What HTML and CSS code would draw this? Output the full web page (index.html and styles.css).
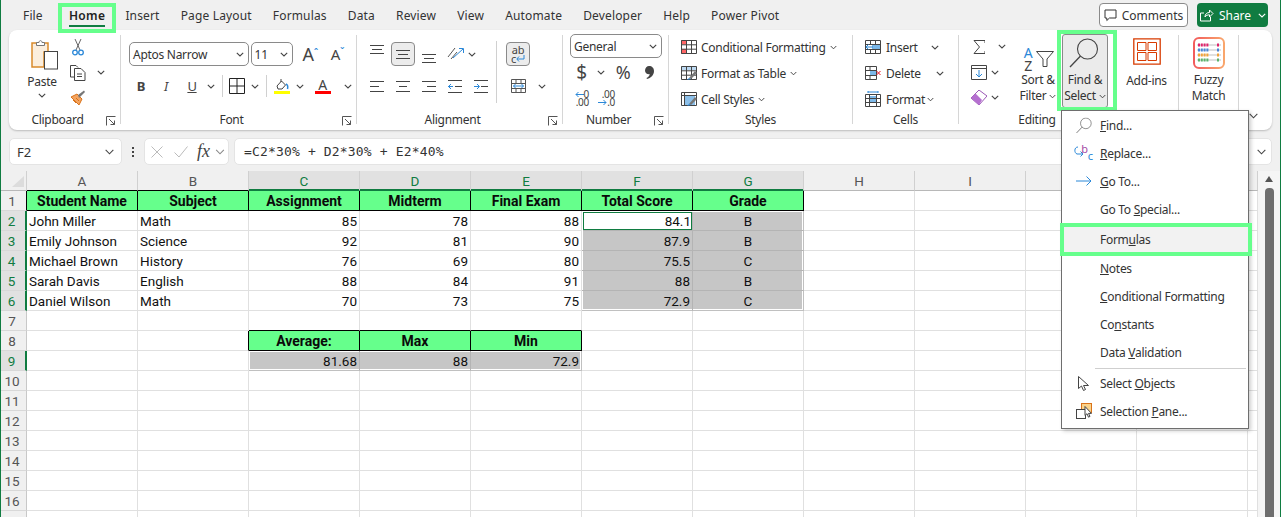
FILE: index.html
```html
<!DOCTYPE html>
<html lang="en">
<head>
<meta charset="utf-8">
<title>Excel – Find &amp; Select</title>
<link rel="stylesheet" href="styles.css">
</head>
<body>
<svg class="defs" width="0" height="0" aria-hidden="true">
  <symbol id="chev" viewBox="0 0 8 5"><path d="M.8.8 4 4 7.2.8" fill="none" stroke="#444" stroke-width="1.1"/></symbol>
  <symbol id="launch" viewBox="0 0 10 10"><path d="M.5 9.5V.5h9M3 3l5.5 5.5M4.5 8.5h4v-4" fill="none" stroke="#555"/></symbol>
  <symbol id="lens" viewBox="0 0 30 30"><circle cx="18.5" cy="11" r="10" fill="none" stroke="#444" stroke-width="1.1"/><path d="M11.5 18 1 29" fill="none" stroke="#444" stroke-width="1.3"/></symbol>
</svg>
<div class="window">

<header class="tabs">
  <nav class="tablist">
    <span class="tab">File</span><span class="tab tab-on">Home</span><span class="tab">Insert</span><span class="tab">Page Layout</span><span class="tab">Formulas</span><span class="tab">Data</span><span class="tab">Review</span><span class="tab">View</span><span class="tab">Automate</span><span class="tab">Developer</span><span class="tab">Help</span><span class="tab">Power Pivot</span>
  </nav>
  <div class="actions">
    <button class="btn-comments"><svg width="13" height="13" viewBox="0 0 13 13"><path d="M1 1h11v8H5.500L2.800 11.500V9H1z" fill="none" stroke="#333"/></svg>Comments</button>
    <button class="btn-share"><svg width="15" height="14" viewBox="0 0 15 14"><path d="M5 5H1.500v8h10V9M6 9c0-3 2-4.500 4.500-4.500V2L14 5.500 10.500 9V6.800C8.500 6.800 7 7.500 6 9z" fill="none" stroke="#fff"/></svg>Share<svg class="share-chev" width="8" height="5" viewBox="0 0 8 5"><path d="M.8.8 4 4 7.200.8" fill="none" stroke="#fff" stroke-width="1.100"/></svg></button>
  </div>
</header>

<section class="ribbon">

  <div class="group g-clip">
    <div class="body clip-body">
      <div class="paste">
        <svg class="paste-ic" width="28" height="31" viewBox="0 0 28 31"><path d="M7 4H1v24h12V13h4V4h-6" fill="#fbeedd" stroke="#d98a2b" stroke-width="1.500"/><path d="M5.500 6.500V3.500H8C8 1 11 1 11 3.500h2.500v3z" fill="#fff" stroke="#777"/><rect x="13.500" y="12.500" width="13" height="17.500" fill="#fff" stroke="#444"/></svg>
        <span class="paste-t">Paste</span>
        <svg class="ch" width="8" height="5"><use href="#chev"/></svg>
      </div>
      <div class="clip-small">
        <svg width="12" height="17" viewBox="0 0 12 17"><path d="M3 0l5 11M9 0 4 11" fill="none" stroke="#666"/><circle cx="3" cy="13.500" r="2.300" fill="none" stroke="#2b88d8" stroke-width="1.300"/><circle cx="9" cy="13.500" r="2.300" fill="none" stroke="#2b88d8" stroke-width="1.300"/></svg>
        <i></i>
        <svg width="16" height="16" viewBox="0 0 16 16"><path d="M5 12H.5V.5H6l2 2" fill="none" stroke="#444"/><path d="M4.500 3.500H11l4 4v8H4.500z" fill="#fff" stroke="#444"/><path d="M7 9h5M7 11.500h5" stroke="#444"/></svg>
        <svg class="ch" width="8" height="5"><use href="#chev"/></svg>
        <svg width="16" height="16" viewBox="0 0 16 16"><path d="M1 7 7 4l5 5-3 6z" fill="#f4a460" stroke="#d9731a"/><path d="M8 5l1 3 6-6-1-1.500z" fill="#777"/><path d="M3 10l3 3M6 8l3 3" stroke="#d9731a"/></svg>
        <i></i>
      </div>
    </div>
    <div class="label"><span>Clipboard</span><svg width="10" height="10"><use href="#launch"/></svg></div>
  </div>

  <div class="group g-font">
    <div class="body font-body">
      <div class="font-top">
        <div class="combo c-font"><span>Aptos Narrow</span><svg width="8" height="5"><use href="#chev"/></svg></div>
        <div class="combo c-size"><span>11</span><svg width="8" height="5"><use href="#chev"/></svg></div>
        <span class="grow">A<sup>ˆ</sup></span>
        <span class="shrink">A<sup>ˇ</sup></span>
      </div>
      <div class="font-bottom">
        <b class="fmt">B</b><em class="fmt">I</em><u class="fmt">U</u>
        <svg width="8" height="5"><use href="#chev"/></svg>
        <span class="vsep"></span>
        <svg width="16" height="16" viewBox="0 0 16 16"><path d="M.5.500h15v15H.500zM8 .5v15M.5 8h15" fill="none" stroke="#222"/></svg>
        <svg width="8" height="5"><use href="#chev"/></svg>
        <span class="vsep"></span>
        <svg width="16" height="16" viewBox="0 0 16 16"><path d="M3 8l4.500-5 4 4-3.500 4H4z" fill="#fff" stroke="#444"/><path d="M7 1v3" stroke="#444"/><path d="M12 6c2 1 2 3 1.500 5" fill="none" stroke="#2b88d8" stroke-width="1.500"/><rect y="13" width="16" height="3" fill="#ff0"/></svg>
        <svg width="8" height="5"><use href="#chev"/></svg>
        <span class="fcolor">A</span>
        <svg width="8" height="5"><use href="#chev"/></svg>
      </div>
    </div>
    <div class="label"><span>Font</span><svg width="10" height="10"><use href="#launch"/></svg></div>
  </div>

  <div class="group g-align">
    <div class="body align-body">
      <svg class="al-top" width="14" height="9" viewBox="0 0 14 9"><path d="M0 .5h14M2 4.500h10M0 8.500h14" stroke="#444"/></svg>
      <span class="pressed"><svg width="14" height="9" viewBox="0 0 14 9"><path d="M0 .5h14M2 4.500h10M0 8.500h14" stroke="#444"/></svg></span>
      <svg class="al-bot" width="14" height="9" viewBox="0 0 14 9"><path d="M0 .5h14M2 4.500h10M0 8.500h14" stroke="#444"/></svg>
      <svg width="17" height="16" viewBox="0 0 17 16"><path d="M1 11 8 2M4 13l6-7" stroke="#555"/><path d="M6 12 16 3M12 2.500h4.500V7" fill="none" stroke="#2b88d8"/></svg>
      <svg class="a-chev" width="8" height="5"><use href="#chev"/></svg>
      <span class="vsep tall"></span>
      <span class="pressed wrap"><span>ab</span><span class="wrap-c">c<svg width="9" height="8" viewBox="0 0 9 8"><path d="M8 0v4H1M3 1.500 .8 4 3 6.500" fill="none" stroke="#2b88d8"/></svg></span></span>
      <svg class="al" width="14" height="11" viewBox="0 0 14 11"><path d="M0 .5h14M0 5.500h9M0 10.500h14" stroke="#444"/></svg>
      <svg class="al" width="14" height="11" viewBox="0 0 14 11"><path d="M0 .5h14M3 5.500h8M0 10.500h14" stroke="#444"/></svg>
      <svg class="al" width="14" height="11" viewBox="0 0 14 11"><path d="M0 .5h14M5 5.500h9M0 10.500h14" stroke="#444"/></svg>
      <svg class="al" width="14" height="13" viewBox="0 0 14 13"><path d="M0 .5h14M7 6.500h7M0 12.500h14" stroke="#444"/><path d="M5 6.500H0M3 4 .5 6.500 3 9" fill="none" stroke="#2b88d8"/></svg>
      <svg class="al" width="14" height="13" viewBox="0 0 14 13"><path d="M0 .5h14M7 6.500h7M0 12.500h14" stroke="#444"/><path d="M0 6.500h5M3 4l2.500 2.500L3 9" fill="none" stroke="#2b88d8"/></svg>
      <svg class="merge" width="15" height="14" viewBox="0 0 15 14"><path d="M.5.500h14v13H.500zM.5 4.500h14M.5 9.500h14M5 .5v4M10 .5v4M5 9.500v4M10 9.500v4" fill="none" stroke="#555"/><path d="M2.500 7h10M4.500 5 2.500 7l2 2M10.500 5l2 2-2 2" fill="none" stroke="#2b88d8"/></svg>
      <svg class="m-chev" width="8" height="5"><use href="#chev"/></svg>
    </div>
    <div class="label"><span>Alignment</span><svg width="10" height="10"><use href="#launch"/></svg></div>
  </div>

  <div class="group g-num">
    <div class="body num-body">
      <div class="combo c-num"><span>General</span><svg width="8" height="5"><use href="#chev"/></svg></div>
      <div class="num-row">
        <span class="big">$</span>
        <svg width="8" height="5"><use href="#chev"/></svg>
        <span class="big pct">%</span>
        <svg width="9" height="13" viewBox="0 0 9 13"><path d="M4 0c3 0 5 2 5 5 0 4-3 7-7 8l-.5-1c2-1 3-2.500 3.300-3.800C2 8.500 0 7 0 4.500 0 2 2 0 4 0z" fill="#444"/></svg>
      </div>
      <div class="num-row2">
        <span class="dec"><svg width="9" height="7" viewBox="0 0 9 7"><path d="M9 3.500H1M3.500 1 1 3.500 3.500 6" fill="none" stroke="#2b88d8"/></svg>0<br>.00</span>
        <span class="dec">.00<br><svg width="9" height="7" viewBox="0 0 9 7"><path d="M0 3.500h8M5.500 1 8 3.500 5.500 6" fill="none" stroke="#2b88d8"/></svg>.0</span>
      </div>
    </div>
    <div class="label"><span>Number</span><svg width="10" height="10"><use href="#launch"/></svg></div>
  </div>

  <div class="group g-styles">
    <div class="body list-body">
      <div class="li"><svg width="16" height="14" viewBox="0 0 16 14"><rect width="6" height="4.500" y="0" fill="#f66"/><rect y="9" width="6" height="5" fill="#f66"/><path d="M.5.500h15v13H.500zM.5 4.800h15M.5 9.200h15M5.500.5v13M10.500.5v13" fill="none" stroke="#444"/></svg><span>Conditional Formatting</span><svg width="7" height="5"><use href="#chev"/></svg></div>
      <div class="li"><svg width="16" height="14" viewBox="0 0 16 14"><rect y="0" width="16" height="4" fill="#bcd9f2"/><path d="M.5.500h15v13H.500zM.5 4.800h15M.5 9.200h15M5.500.5v13M10.500.5v13" fill="none" stroke="#444"/><path d="M8 12 14 5l2 2-6 6z" fill="#777"/><path d="M6 14l2-2 2 1z" fill="#2b88d8"/></svg><span>Format as Table</span><svg width="7" height="5"><use href="#chev"/></svg></div>
      <div class="li"><svg width="16" height="14" viewBox="0 0 16 14"><rect x="3" y="3" width="11" height="10" fill="#8cc0ea"/><path d="M.5.500h15v13H.500zM.5 3.500h15M3.500.5v13" fill="none" stroke="#444"/><path d="M8 12 14 5l2 2-6 6z" fill="#777"/><path d="M6 14l2-2 2 1z" fill="#2b88d8"/></svg><span>Cell Styles</span><svg width="7" height="5"><use href="#chev"/></svg></div>
    </div>
    <div class="label label-c"><span>Styles</span></div>
  </div>

  <div class="group g-cells">
    <div class="body list-body cells-body">
      <div class="li"><svg width="16" height="14" viewBox="0 0 16 14"><rect x="7" y="4" width="8" height="5" fill="#7cb8e8"/><path d="M.5.500h15v13H.500zM.5 4.500h15M.5 9.500h15M5.500.5v4M10.500.5v4M5.500 9.500v4M10.500 9.500v4" fill="none" stroke="#444"/><path d="M8 7H1M3.500 4.500 1 7l2.500 2.500" fill="none" stroke="#2b88d8"/></svg><span>Insert</span><svg class="c1" width="8" height="5"><use href="#chev"/></svg></div>
      <div class="li"><svg width="16" height="14" viewBox="0 0 16 14"><rect x="5" y="4" width="6" height="6" fill="#7cb8e8"/><path d="M.5.500h11v13H.500zM.5 4.500h11M.5 9.500h11M5 .5v4M5 9.500v4" fill="none" stroke="#444"/><path d="M11.500 5 15.500 9M15.500 5l-4 4" stroke="#e81123"/></svg><span>Delete</span><svg class="c2" width="8" height="5"><use href="#chev"/></svg></div>
      <div class="li"><svg width="16" height="16" viewBox="0 0 16 16"><rect x="5" y="5" width="7" height="6" fill="#7cb8e8"/><path d="M.5 3.500h15v12H.500zM.5 7.500h15M.5 11.500h15M4.500 3.500v12M11.500 3.500v12" fill="none" stroke="#444"/><path d="M3 1h10M3 0v2M13 0v2" stroke="#2b88d8"/></svg><span>Format</span><svg class="c4" width="7" height="5"><use href="#chev"/></svg></div>
    </div>
    <div class="label label-c"><span>Cells</span></div>
  </div>

  <div class="group g-edit">
    <div class="body edit-body">
      <div class="edit-small">
        <svg width="12" height="14" viewBox="0 0 12 14"><path d="M12 3V.5H1L6.500 7 1 13.500h11V11" fill="none" stroke="#444"/></svg>
        <svg class="c3" width="8" height="5"><use href="#chev"/></svg>
        <svg width="16" height="15" viewBox="0 0 16 15"><path d="M.5.500h15v14H.500zM.5 3.500h15" fill="none" stroke="#444"/><path d="M8 5v7M5 9l3 3 3-3" fill="none" stroke="#2b88d8"/></svg>
        <svg width="8" height="5"><use href="#chev"/></svg>
        <svg width="16" height="15" viewBox="0 0 16 15"><path d="M0 8 8 0l8 6-8 9z" fill="#fff" stroke="#9a57b5"/><path d="M0 8 4.500 3.500 11 10 8 15z" fill="#b56fd0"/></svg>
        <svg width="8" height="5"><use href="#chev"/></svg>
      </div>
      <div class="big-btn sort">
        <span class="sort-ic"><span class="az"><span class="a">A</span><span class="z">Z</span></span><svg width="18" height="16" viewBox="0 0 18 16"><path d="M.5.500h17L11 8v7.500H7V8z" fill="#fff" stroke="#444"/></svg></span>
        <span class="t">Sort &amp;</span>
        <span class="t">Filter <svg width="7" height="5"><use href="#chev"/></svg></span>
      </div>
      <div class="big-btn find">
        <svg class="lens" width="30" height="30"><use href="#lens"/></svg>
        <span class="t">Find &amp;</span>
        <span class="t">Select <svg width="7" height="5"><use href="#chev"/></svg></span>
      </div>
    </div>
    <div class="label label-c"><span>Editing</span></div>
  </div>

  <div class="group g-add">
    <div class="body">
      <div class="big-btn">
        <svg class="bi" width="28" height="27" viewBox="0 0 28 27"><path d="M.8.800h26.400v25.400H.800z" fill="none" stroke="#d83b01" stroke-width="1.300"/><path d="M4.500 4.500h8.500v8H4.500zM15 4.500h8.500v8H15zM4.500 14.500h8.500v8H4.500zM15 14.500h8.500v8H15z" fill="none" stroke="#d83b01"/></svg>
        <span class="t">Add-ins</span>
      </div>
    </div>
  </div>

  <div class="group g-fuzzy">
    <div class="body">
      <div class="big-btn">
        <svg class="fz" width="32" height="32" viewBox="0 0 32 32">
          <defs><linearGradient id="fg" x1="0" y1="0" x2="1" y2="0"><stop offset="0" stop-color="#f25c5c"/><stop offset="1" stop-color="#f9a66c"/></linearGradient></defs>
          <rect x="1" y="1" width="30" height="30" rx="5" fill="#fff" stroke="url(#fg)" stroke-width="2"/>
          <path d="M4 8h24M4 13h24M4 18h24M4 23h24" stroke="#999" stroke-width=".6"/>
          <path d="M5 8h11M24 8h2" stroke="#e0246c" stroke-width="3" stroke-dasharray="2 .8"/>
          <path d="M5 13h11M24 13h2" stroke="#4a86d8" stroke-width="3" stroke-dasharray="2 .8"/>
          <path d="M5 18h11M24 18h2" stroke="#f2a33a" stroke-width="3" stroke-dasharray="2 .8"/>
          <path d="M5 23h11M24 23h2" stroke="#5bb36a" stroke-width="3" stroke-dasharray="2 .8"/>
        </svg>
        <span class="t">Fuzzy</span>
        <span class="t">Match</span>
      </div>
    </div>
  </div>

  <svg class="collapse" width="11" height="6" viewBox="0 0 8 5"><path d="M.8.800 4 4 7.200.8" fill="none" stroke="#444" stroke-width=".9"/></svg>
</section>

<section class="fbar">
  <div class="namebox"><span>F2</span><svg width="11" height="6" viewBox="0 0 8 5"><path d="M.8.800 4 4 7.200.8" fill="none" stroke="#444" stroke-width=".9"/></svg></div>
  <div class="dots"><i></i><i></i><i></i></div>
  <div class="fx">
    <svg width="12" height="12" viewBox="0 0 12 12"><path d="M.5.500l11 11M11.500.5l-11 11" stroke="#bbb"/></svg>
    <svg width="14" height="12" viewBox="0 0 14 12"><path d="M.5 6.500 5 11 13.500.5" fill="none" stroke="#bbb"/></svg>
    <em>fx</em>
    <svg width="10" height="6" viewBox="0 0 8 5"><path d="M.8.800 4 4 7.200.8" fill="none" stroke="#888" stroke-width=".9"/></svg>
  </div>
  <div class="formula"><span>=C2*30% + D2*30% + E2*40%</span><svg width="11" height="6" viewBox="0 0 8 5"><path d="M.8.800 4 4 7.200.8" fill="none" stroke="#444" stroke-width=".9"/></svg></div>
</section>

<section class="sheetwrap">
  <div class="sheet">
    <div class="h corner"><svg width="12" height="11" viewBox="0 0 12 11"><path d="M12 0v11H0z" fill="#dcdcdc"/></svg></div>
    <div class="h bb">A</div><div class="h bb">B</div><div class="h on">C</div><div class="h on">D</div><div class="h on">E</div><div class="h on">F</div><div class="h on">G</div><div class="h">H</div><div class="h">I</div><div class="h">J</div><div class="h">K</div><div class="h"></div>

    <div class="r br">1</div>
    <div class="c th">Student Name</div><div class="c th">Subject</div><div class="c th">Assignment</div><div class="c th">Midterm</div><div class="c th">Final Exam</div><div class="c th">Total Score</div><div class="c th">Grade</div><div class="c"></div><div class="c"></div><div class="c"></div><div class="c"></div><div class="c"></div>

    <div class="r on">2</div>
    <div class="c">John Miller</div><div class="c">Math</div><div class="c n">85</div><div class="c n">78</div><div class="c n">88</div><div class="c n active">84.1</div><div class="c m s-t s-r">B</div><div class="c"></div><div class="c"></div><div class="c"></div><div class="c"></div><div class="c"></div>

    <div class="r on">3</div>
    <div class="c">Emily Johnson</div><div class="c">Science</div><div class="c n">92</div><div class="c n">81</div><div class="c n">90</div><div class="c n s s-l">87.9</div><div class="c m s-r">B</div><div class="c"></div><div class="c"></div><div class="c"></div><div class="c"></div><div class="c"></div>

    <div class="r on">4</div>
    <div class="c">Michael Brown</div><div class="c">History</div><div class="c n">76</div><div class="c n">69</div><div class="c n">80</div><div class="c n s s-l">75.5</div><div class="c m s-r">C</div><div class="c"></div><div class="c"></div><div class="c"></div><div class="c"></div><div class="c"></div>

    <div class="r on">5</div>
    <div class="c">Sarah Davis</div><div class="c">English</div><div class="c n">88</div><div class="c n">84</div><div class="c n">91</div><div class="c n s s-l">88</div><div class="c m s-r">B</div><div class="c"></div><div class="c"></div><div class="c"></div><div class="c"></div><div class="c"></div>

    <div class="r on">6</div>
    <div class="c">Daniel Wilson</div><div class="c">Math</div><div class="c n">70</div><div class="c n">73</div><div class="c n">75</div><div class="c n s s-l s-b">72.9</div><div class="c m s-r s-b">C</div><div class="c"></div><div class="c"></div><div class="c"></div><div class="c"></div><div class="c"></div>

    <div class="r">7</div>
    <div class="c"></div><div class="c"></div><div class="c bb"></div><div class="c bb"></div><div class="c bb"></div><div class="c"></div><div class="c"></div><div class="c"></div><div class="c"></div><div class="c"></div><div class="c"></div><div class="c"></div>

    <div class="r">8</div>
    <div class="c"></div><div class="c br"></div><div class="c th">Average:</div><div class="c th">Max</div><div class="c th">Min</div><div class="c"></div><div class="c"></div><div class="c"></div><div class="c"></div><div class="c"></div><div class="c"></div><div class="c"></div>

    <div class="r on">9</div>
    <div class="c"></div><div class="c"></div><div class="c n s s-l s-b s-t">81.68</div><div class="c n s s-b s-t">88</div><div class="c n s s-r s-b s-t">72.9</div><div class="c"></div><div class="c"></div><div class="c"></div><div class="c"></div><div class="c"></div><div class="c"></div><div class="c"></div>

    <div class="r">10</div>
    <div class="c"></div><div class="c"></div><div class="c"></div><div class="c"></div><div class="c"></div><div class="c"></div><div class="c"></div><div class="c"></div><div class="c"></div><div class="c"></div><div class="c"></div><div class="c"></div>
    <div class="r">11</div>
    <div class="c"></div><div class="c"></div><div class="c"></div><div class="c"></div><div class="c"></div><div class="c"></div><div class="c"></div><div class="c"></div><div class="c"></div><div class="c"></div><div class="c"></div><div class="c"></div>
    <div class="r">12</div>
    <div class="c"></div><div class="c"></div><div class="c"></div><div class="c"></div><div class="c"></div><div class="c"></div><div class="c"></div><div class="c"></div><div class="c"></div><div class="c"></div><div class="c"></div><div class="c"></div>
    <div class="r">13</div>
    <div class="c"></div><div class="c"></div><div class="c"></div><div class="c"></div><div class="c"></div><div class="c"></div><div class="c"></div><div class="c"></div><div class="c"></div><div class="c"></div><div class="c"></div><div class="c"></div>
    <div class="r">14</div>
    <div class="c"></div><div class="c"></div><div class="c"></div><div class="c"></div><div class="c"></div><div class="c"></div><div class="c"></div><div class="c"></div><div class="c"></div><div class="c"></div><div class="c"></div><div class="c"></div>
    <div class="r">15</div>
    <div class="c"></div><div class="c"></div><div class="c"></div><div class="c"></div><div class="c"></div><div class="c"></div><div class="c"></div><div class="c"></div><div class="c"></div><div class="c"></div><div class="c"></div><div class="c"></div>
    <div class="r">16</div>
    <div class="c"></div><div class="c"></div><div class="c"></div><div class="c"></div><div class="c"></div><div class="c"></div><div class="c"></div><div class="c"></div><div class="c"></div><div class="c"></div><div class="c"></div><div class="c"></div>
    <div class="r"></div>
    <div class="c"></div><div class="c"></div><div class="c"></div><div class="c"></div><div class="c"></div><div class="c"></div><div class="c"></div><div class="c"></div><div class="c"></div><div class="c"></div><div class="c"></div><div class="c"></div>
  </div>
  <aside class="vscroll"><span class="up"></span><span class="thumb"></span></aside>
</section>

<div class="mark mark-home"></div>
<div class="mark mark-find"></div>

<div class="menu">
  <div class="mi"><span class="mic"><svg width="16" height="17" viewBox="0 0 30 30"><use href="#lens"/></svg></span><span><u>F</u>ind...</span></div>
  <div class="mi"><span class="mic replace"><svg width="10" height="14" viewBox="0 0 10 14"><path d="M5 1C1 1 1 7 4 8H10M7.500 5.500 10 8l-2.500 2.500" fill="none" stroke="#2b88d8" transform="translate(-1)"/></svg><span class="rb">b</span><span class="rc">c</span></span><span><u>R</u>eplace...</span></div>
  <div class="mi"><span class="mic"><svg width="16" height="10" viewBox="0 0 16 10"><path d="M0 5h15M10.500.5 15 5l-4.500 4.500" fill="none" stroke="#2b88d8"/></svg></span><span><u>G</u>o To...</span></div>
  <div class="mi"><span class="mic"></span><span>Go To <u>S</u>pecial...</span></div>
  <div class="mi mi-hot"><span class="mic"></span><span>Form<u>u</u>las</span></div>
  <div class="mi"><span class="mic"></span><span><u>N</u>otes</span></div>
  <div class="mi"><span class="mic"></span><span><u>C</u>onditional Formatting</span></div>
  <div class="mi"><span class="mic"></span><span>Co<u>n</u>stants</span></div>
  <div class="mi"><span class="mic"></span><span>Data <u>V</u>alidation</span></div>
  <div class="msep"></div>
  <div class="mi"><span class="mic"><svg width="11" height="15" viewBox="0 0 11 15"><path d="M.5.500v12l3-2.500 2 4.500 2-1-2-4h5z" fill="#fff" stroke="#444"/></svg></span><span>Select <u>O</u>bjects</span></div>
  <div class="mi"><span class="mic"><svg width="16" height="16" viewBox="0 0 16 16"><rect x="5.500" y=".5" width="10" height="9" fill="#fbd38a" stroke="#d9731a"/><rect x=".5" y="6.500" width="9" height="9" fill="#fff" stroke="#444"/><path d="M9.500 3.500v9l2-1.800 1.500 3.500 1.500-.8-1.500-3h3z" fill="#fff" stroke="#444" transform="translate(-.5)"/></svg></span><span>Selection <u>P</u>ane...</span></div>
  <div class="mark mark-formulas"></div>
</div>

</div>
</body>
</html>
```

FILE: styles.css
```css
* { box-sizing: border-box; }
html, body { margin: 0; height: 100%; overflow: hidden; }
body { font: 12px "Noto Sans", "Open Sans", sans-serif; color: #333; }
.defs { position: absolute; }
svg { display: block; flex: none; }
button { font: inherit; color: inherit; padding: 0; cursor: default; }

.window {
  position: relative;
  width: 1281px; height: 517px;
  background: #f0f0f0;
  border-left: 1px solid #107c41;
  border-right: 1px solid #107c41;
  overflow: hidden;
}

/* Tabs */
.tabs { height: 30px; display: flex; align-items: flex-start; justify-content: space-between; padding-right: 12px; }
.tablist { display: flex; gap: 21.1px; padding: 7px 0 0 22px; font-size: 12px; letter-spacing: .15px; line-height: 18px; }
.tab { white-space: nowrap; }
.tab-on { font-weight: 600; color: #222; margin: 0 -1px 0 5px; letter-spacing: .35px; }
.tab-on::after { content: ""; display: block; height: 2px; background: #107c41; }
.actions { display: flex; gap: 9px; padding-top: 3px; }
.btn-comments { width: 89px; height: 24px; background: #fff; border: 1px solid #8a8a8a; border-radius: 4px; display: flex; align-items: center; justify-content: center; gap: 5px; }
.btn-share { width: 71px; height: 24px; background: #107c41; color: #fff; border: 0; border-radius: 4px; display: flex; align-items: center; justify-content: center; gap: 5px; }
.share-chev { margin-left: 2px; }

/* Ribbon */
.ribbon {
  margin-left: 8px; width: 1263px; height: 100px;
  background: #fff; border-radius: 8px;
  box-shadow: 0 1px 2px rgba(0,0,0,.22);
  display: flex; align-items: flex-start; padding-top: 5px;
  letter-spacing: -.28px;
}
.group { height: 89px; border-right: 1px solid #d6d6d6; display: flex; flex-direction: column; flex: none; }
.body { height: 75px; }
.label { height: 14px; line-height: 20px; display: flex; padding-right: 4px; }
.label span { flex: 1; text-align: center; }
.label svg { margin-top: 6px; }
.label-c { padding-right: 0; }
.g-clip { width: 112px; } .g-font { width: 236px; } .g-align { width: 206px; }
.g-num { width: 106px; } .g-styles { width: 184px; } .g-cells { width: 106px; }
.g-edit { width: 156px; border-right: 0; } .g-add { width: 64px; } .g-fuzzy { width: 60px; }

.clip-body { display: flex; }
.paste { width: 40px; margin-left: 13px; display: flex; flex-direction: column; align-items: center; padding-top: 4px; }
.paste-ic { margin-left: 5px; }
.paste-t { line-height: 16px; margin-top: 4px; }
.paste .ch { margin-top: 3px; }
.clip-small { display: grid; grid-template-columns: 25px 22px; grid-auto-rows: 25px; place-items: center; margin-left: 3px; }

.combo { height: 24px; background: #fff; border: 1px solid #8a8a8a; border-radius: 5px; display: flex; align-items: center; justify-content: space-between; padding: 0 4px 0 3px; }
.font-body { padding: 7px 0 0 8px; }
.font-top { display: flex; align-items: center; gap: 2px; height: 24px; }
.c-font { width: 123px; } .c-size { width: 43px; padding-left: 3px; }
.grow, .shrink { color: #444; line-height: 24px; display: block; }
.grow { font-size: 18px; margin-left: 8px; width: 27px; }
.shrink { font-size: 15px; width: 26px; margin-left: 0; }
.grow sup, .shrink sup { font-size: 11px; color: #2b88d8; line-height: 0; vertical-align: 4px; }
.font-bottom { display: grid; grid-template-columns: 24px 26px 26px 12px 11px 17px 20px 2px 29px 7px 39px 12px; align-items: center; justify-items: center; height: 17px; margin-top: 9px; }
.fmt { font-size: 13px; color: #444; }
.vsep { width: 1px; height: 22px; background: #d0d0d0; }
.fcolor { font-size: 14px; line-height: 13px; width: 16px; text-align: center; border-bottom: 3px solid #f00; color: #444; }

.align-body { display: grid; grid-template-columns: 26px 26px 26px 26px 26px 4px 40px 10px; grid-template-rows: 24px 24px; row-gap: 8px; padding-top: 7px; margin-left: 7px; place-items: center; }
.al-top { margin-top: -9px; }
.al-bot { margin-top: 9px; }
.pressed { width: 24px; height: 24px; border: 1px solid #8a8a8a; border-radius: 4px; background: #ececec; display: flex; align-items: center; justify-content: center; }
.a-chev { justify-self: start; }
.tall { grid-column: 6; grid-row: 1 / span 2; height: 62px; align-self: start; margin-top: -1px; }
.wrap { flex-direction: column; line-height: 9px; font-size: 11px; grid-column: 7; grid-row: 1; color: #444; }
.wrap-c { display: flex; align-items: center; }
.al { grid-row: 2; }
.merge { grid-column: 7; grid-row: 2; }
.m-chev { grid-column: 8; grid-row: 2; justify-self: start; }

.num-body { padding-left: 7px; }
.c-num { width: 92px; padding-left: 3px; margin-top: -1px; }
.num-row { display: grid; grid-template-columns: 23px 15px 30px 22px; align-items: center; justify-items: center; height: 26px; margin-top: 1px; }
.big { font-size: 19px; line-height: 26px; color: #444; }
.pct { font-size: 18px; }
.num-row2 { display: flex; gap: 9px; padding-left: 2px; }
.dec { font-size: 10px; line-height: 8px; width: 17px; color: #444; text-align: right; margin-top: 5px; }
.dec svg { display: inline-block; }

.list-body { padding-left: 12px; display: grid; grid-auto-rows: 26px; margin-top: -1px; height: 76px; }
.li { display: flex; align-items: center; gap: 4px; height: 26px; }
.cells-body .li { gap: 5px; }
.c1 { margin-left: 8px; } .c2 { margin-left: 10px; } .c4 { margin-left: -3px; }

.edit-body { display: flex; }
.edit-small { display: grid; grid-template-columns: 16px 16px; grid-auto-rows: 25.5px; place-items: center; margin: -1px 0 0 12px; width: 45px; flex: none; height: 76px; }
.c3 { margin-left: 14px; }
.big-btn { display: flex; flex-direction: column; align-items: center; line-height: 16px; white-space: nowrap; }
.t { display: flex; align-items: center; gap: 3px; }
.sort { width: 44px; margin-right: 2px; padding-top: 5px; }
.sort-ic { display: flex; align-items: flex-end; height: 32px; }
.sort-ic svg { margin-bottom: 5px; margin-left: 2px; }
.az { display: flex; flex-direction: column; width: 11px; font-size: 14px; line-height: 13px; text-align: center; }
.a { color: #2b88d8; } .z { color: #444; }
.find { width: 46px; height: 74px; background: #ebebeb; border: 1px solid #8a8a8a; border-radius: 3px; padding-top: 3px; margin-top: -1px; }
.lens { margin-bottom: 4px; margin-left: -2px; }
.g-add .big-btn { width: 63px; padding-top: 3px; }
.bi { margin-bottom: 8px; }
.g-fuzzy .big-btn { width: 59px; padding-top: 2px; }
.fz { margin-bottom: 3px; }
.collapse { margin: 78px 0 0 9px; }

/* Formula bar */
.fbar { display: flex; height: 27px; margin: 8px 0 6px 8px; width: 1263px; }
.namebox, .fx, .formula { background: #fff; border: 1px solid #e4e4e4; border-radius: 5px; display: flex; align-items: center; }
.namebox { width: 113px; justify-content: space-between; padding: 0 6px 0 7px; font-size: 13px; }
.dots { width: 22px; display: flex; flex-direction: column; align-items: center; justify-content: center; gap: 2px; }
.dots i { width: 2px; height: 2px; background: #444; }
.fx { width: 85px; padding-left: 6px; gap: 12px; }
.fx svg:nth-child(2) { margin-left: -1px; }
.fx em { font: italic 400 18px "Liberation Serif", serif; color: #444; margin-left: -3px; }
.fx svg:last-child { margin-left: -7px; }
.formula { flex: 1; margin-left: 5px; justify-content: space-between; padding: 0 4px 0 9px; font: 13px "DejaVu Sans Mono", monospace; letter-spacing: .16px; }

/* Sheet */
.sheetwrap { display: flex; height: 346px; overflow: hidden; }
.sheet {
  display: grid; flex: none; width: 1257px;
  grid-template-columns: 26px repeat(11, 111px) 10px;
  grid-auto-rows: 20px;
  background: #fff;
  font: 13.5px Roboto, "Liberation Sans", sans-serif; color: #111;
}
.h { background: #f0f0f0; border-right: 1px solid #d0d0d0; border-bottom: 1px solid #b8b8b8; text-align: center; line-height: 20px; color: #555; }
.h.on { background: #e1e1e1; color: #107c41; box-shadow: inset 0 -1px #107c41; border-bottom-color: #107c41; }
.corner { display: flex; align-items: flex-end; justify-content: flex-end; padding: 0 2px 3px 0; }
.r { background: #f0f0f0; border-right: 1px solid #c8c8c8; border-bottom: 1px solid #d8d8d8; text-align: center; line-height: 20px; color: #555; padding-right: 3px; }
.r.on { background: #e1e1e1; color: #107c41; border-right: 2px solid #107c41; }
.c { border-right: 1px solid #e0e0e0; border-bottom: 1px solid #e0e0e0; padding: 1px 2px 0; line-height: 19px; white-space: nowrap; overflow: hidden; }
.n { text-align: right; }
.m { text-align: center; background: #c6c6c6; border-color: #b4b4b4; }
.s { background: #c6c6c6; border-color: #b4b4b4; }
.th { background: #66ff8c; font-weight: 700; font-size: 14px; text-align: center; color: #0a0a0a; border-right: 1px solid #000; border-bottom: 1px solid #000; }
.bb { border-bottom-color: #000; }
.br { border-right-color: #000; }
.s-l { box-shadow: inset 1px 0 #fff; }
.s-r { box-shadow: inset -1px 0 #fff; border-right-color: #c0c0c0; }
.s-b { border-bottom-color: #c0c0c0; }
.s-l.s-b { box-shadow: inset 1px 0 #fff, inset 0 -1px #fff; }
.s-r.s-b { box-shadow: inset -1px 0 #fff, inset 0 -1px #fff; }
.s-b.s-t { box-shadow: inset 0 -1px #fff, inset 0 1px #fff; }
.s-l.s-b.s-t { box-shadow: inset 1px 0 #fff, inset 0 -1px #fff, inset 0 1px #fff; }
.s-r.s-b.s-t { box-shadow: inset -1px 0 #fff, inset 0 -1px #fff, inset 0 1px #fff; }
.s-t.s-r { box-shadow: inset -1px 0 #fff, inset 0 1px #fff; }
.active { background: #fff; box-shadow: inset 0 0 0 1px #107c41; margin: 1px 0 0 1px; border-color: #b4b4b4; padding: 0 1px 0 2px; line-height: 18px; }

.vscroll { flex: 1; background: #f5f5f5; padding-left: 7px; display: flex; flex-direction: column; }
.up { width: 0; height: 0; border: 4.5px solid transparent; border-top: 0; border-bottom: 6px solid #555; margin: 5px 0 6px; }
.thumb { width: 9px; flex: 1; background: #6e6e6e; border-radius: 4px 4px 0 0; }

/* Overlays */
.mark { position: absolute; border: 4px solid #66ff8c; pointer-events: none; }
.mark-home { left: 57px; top: 3px; width: 58px; height: 30px; }
.mark-find { left: 1056px; top: 30px; width: 60px; height: 81px; }
.menu {
  position: absolute; left: 1060px; top: 110px; width: 188px; height: 319px;
  background: #fff; border: 1px solid #6e6e6e;
  box-shadow: 2px 2px 4px rgba(0,0,0,.2);
  letter-spacing: -.28px;
}
.mi { height: 28px; display: flex; align-items: center; color: #333; }
.mic { width: 38px; flex: none; display: flex; justify-content: center; align-items: center; padding-left: 5px; position: relative; }
.mi-hot { background: #f2f2f2; height: 29px; margin-top: 2px; }
.msep { height: 1px; background: #cfcfcf; margin: 2px 2px 0 33px; }
.replace { font-size: 11px; line-height: 10px; }
.rb { color: #a349a4; margin: -9px 0 0 -3px; }
.rc { color: #2b88d8; margin-top: 6px; }
.mark-formulas { left: -2px; top: 112px; width: 192px; height: 33px; }
```
